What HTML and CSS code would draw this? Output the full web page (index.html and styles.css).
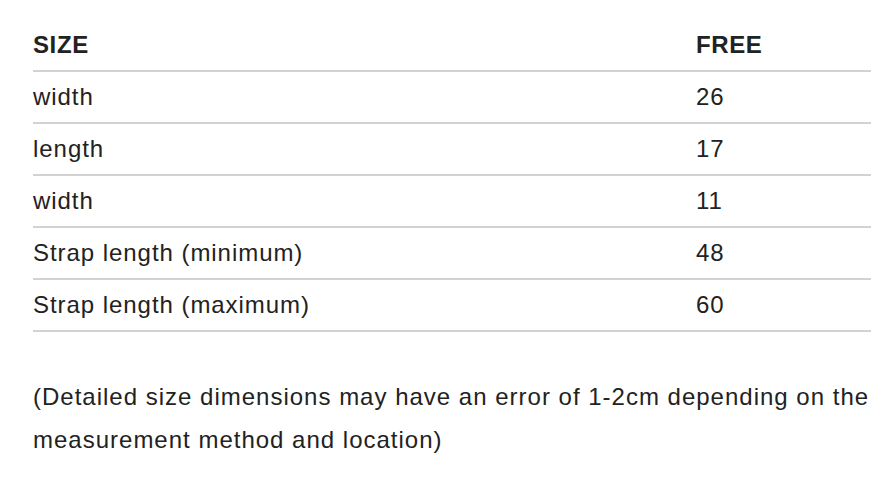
FILE: index.html
```html
<!DOCTYPE html>
<html>
<head>
<meta charset="utf-8">
<link rel="stylesheet" href="styles.css">
</head>
<body>
<div class="wrap">
  <table class="size-table">
    <thead>
      <tr><th>SIZE</th><th>FREE</th></tr>
    </thead>
    <tbody>
      <tr><td>width</td><td>26</td></tr>
      <tr><td>length</td><td>17</td></tr>
      <tr><td>width</td><td>11</td></tr>
      <tr><td>Strap length (minimum)</td><td>48</td></tr>
      <tr><td>Strap length (maximum)</td><td>60</td></tr>
    </tbody>
  </table>
  <p class="note">(Detailed size dimensions may have an error of 1-2cm depending on the measurement method and location)</p>
</div>
</body>
</html>
```

FILE: styles.css
```css
html, body {
  margin: 0;
  padding: 0;
  background: #fff;
}
.wrap {
  padding: 20px 17px 0 33px;
  font-family: "Liberation Sans", Arial, sans-serif;
  font-size: 24px;
  color: #222;
}
.size-table {
  width: 838px;
  border-collapse: collapse;
}
.size-table th,
.size-table td {
  height: 50px;
  padding: 0;
  text-align: left;
  vertical-align: middle;
  border-bottom: 2px solid #d2d2d2;
  letter-spacing: 0.95px;
}
.size-table th {
  font-weight: bold;
  letter-spacing: 0.6px;
}
.size-table th:first-child,
.size-table td:first-child {
  width: 663px;
}
.note {
  margin: 43px 0 0 0;
  line-height: 43px;
  letter-spacing: 1px;
}
```
